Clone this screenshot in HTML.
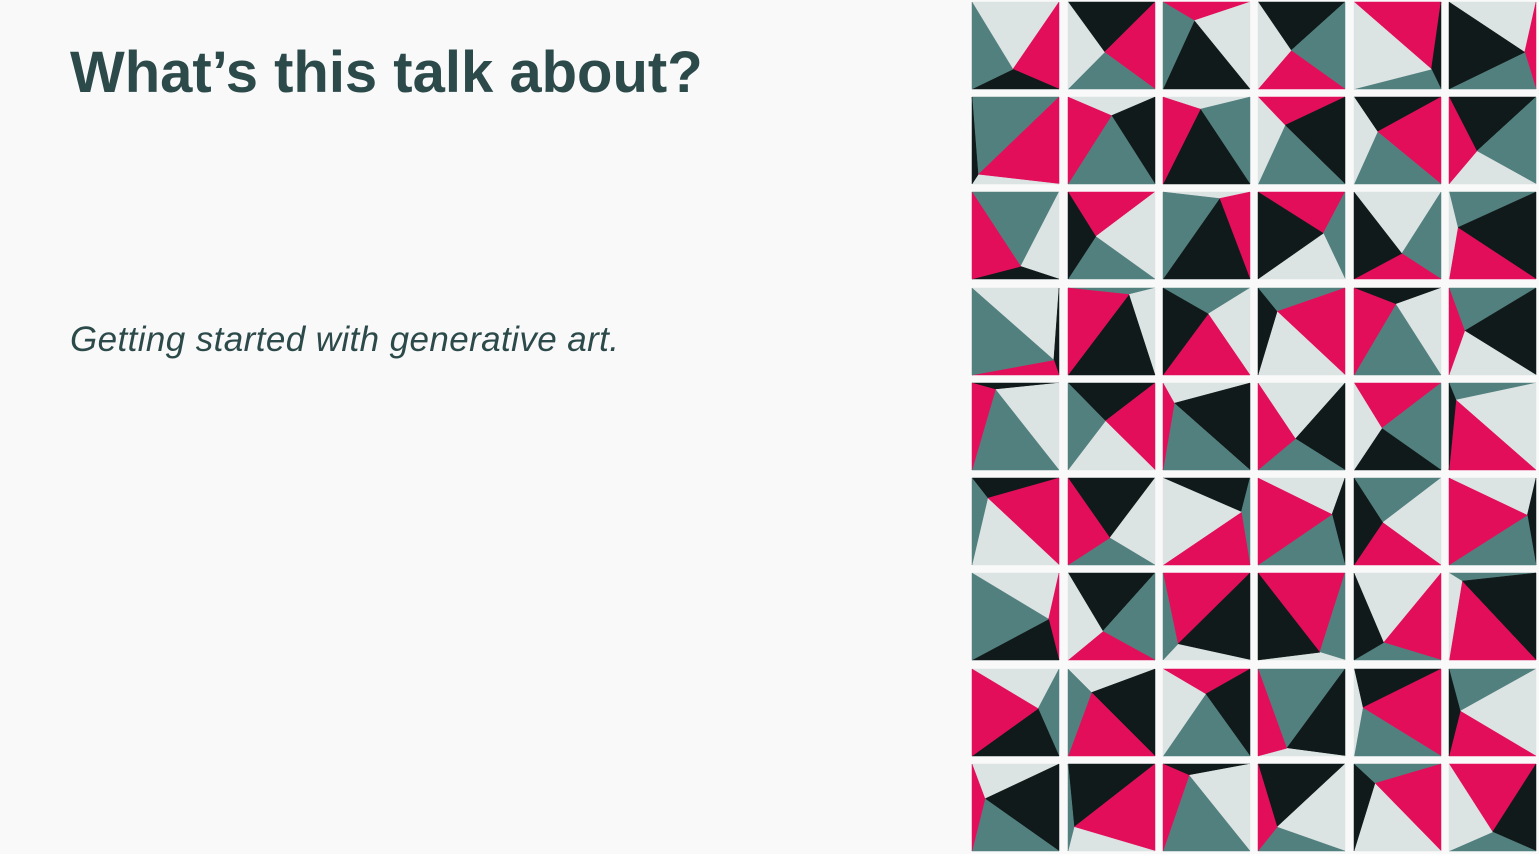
<!DOCTYPE html>
<html><head><meta charset="utf-8"><style>
html,body{margin:0;padding:0;background:#f9f9f9;width:1539px;height:854px;overflow:hidden;position:relative}
h1{position:absolute;left:70px;top:39px;margin:0;font:bold 58px "Liberation Sans",sans-serif;color:#2d4a4b;letter-spacing:0px;white-space:nowrap}
p{position:absolute;left:70px;top:320px;margin:0;font:italic 35px "Liberation Sans",sans-serif;color:#2d4a4b;letter-spacing:0.4px;white-space:nowrap}
svg{position:absolute;left:0;top:0}
</style></head><body>
<h1>What’s this talk about?</h1>
<p>Getting started with generative art.</p>
<svg id="g" width="1539" height="854"></svg>
<script>
var C={l:"#dce3e3",t:"#52807e",p:"#e20e5a",k:"#111a1a"};
var D=[
[[47,83,"lpkt"],[42,62,"kptl"],[36,23,"plkt"],[38,60,"ktpl"],[89,83,"pktl"],[87,62,"lptk"]],
[[7,96,"tplk"],[50,23,"lktp"],[43,15,"ltkp"],[31,35,"pktl"],[27,43,"kptl"],[32,67,"ktlp"]],
[[56,92,"tlkp"],[32,55,"pltk"],[65,8,"lpkt"],[75,51,"ptlk"],[55,76,"ltpk"],[10,44,"tkpl"]],
[[94,89,"lkpt"],[70,8,"tlkp"],[52,32,"tlpk"],[22,29,"tplk"],[48,20,"kltp"],[18,53,"tklp"]],
[[27,8,"kltp"],[43,47,"kplt"],[13,25,"lktp"],[43,69,"lktp"],[32,56,"ptkl"],[8,21,"tlpk"]],
[[18,25,"kplt"],[48,74,"kltp"],[90,42,"ktpl"],[85,45,"lktp"],[33,55,"tlpk"],[90,46,"lktp"]],
[[88,57,"lpkt"],[40,72,"ktpl"],[17,88,"pklt"],[71,98,"ptlk"],[34,86,"lptk"],[15,10,"tkpl"]],
[[76,49,"ltkp"],[27,29,"lkpt"],[49,31,"pktl"],[33,98,"tklp"],[10,48,"kptl"],[13,52,"tlpk"]],
[[15,43,"lktp"],[7,78,"kplt"],[30,14,"kltp"],[22,78,"kltp"],[24,24,"tplk"],[50,84,"pktl"]]
];
var xs=[972,1068,1163,1258,1354,1449],ys=[2,97,192,288,383,478,573,669,764],S=87;
var h="";
for(var r=0;r<9;r++)for(var c=0;c<6;c++){
var d=D[r][c],x=xs[c],y=ys[r];
var px=x+d[0]/100*S,py=y+Math.min(d[1]*0.93,100)/100*S;
var TL=[x,y],TR=[x+S,y],BR=[x+S,y+S],BL=[x,y+S],P=[px,py];
var tris=[[TL,TR],[TR,BR],[BR,BL],[BL,TL]];
for(var i=0;i<4;i++){var a=tris[i][0],b=tris[i][1];
h+='<polygon fill="'+C[d[2][i]]+'" stroke="'+C[d[2][i]]+'" stroke-width="0.5" points="'+a[0]+','+a[1]+' '+b[0]+','+b[1]+' '+P[0].toFixed(1)+','+P[1].toFixed(1)+'"/>';}
}
document.getElementById("g").innerHTML=h;
</script>
</body></html>
